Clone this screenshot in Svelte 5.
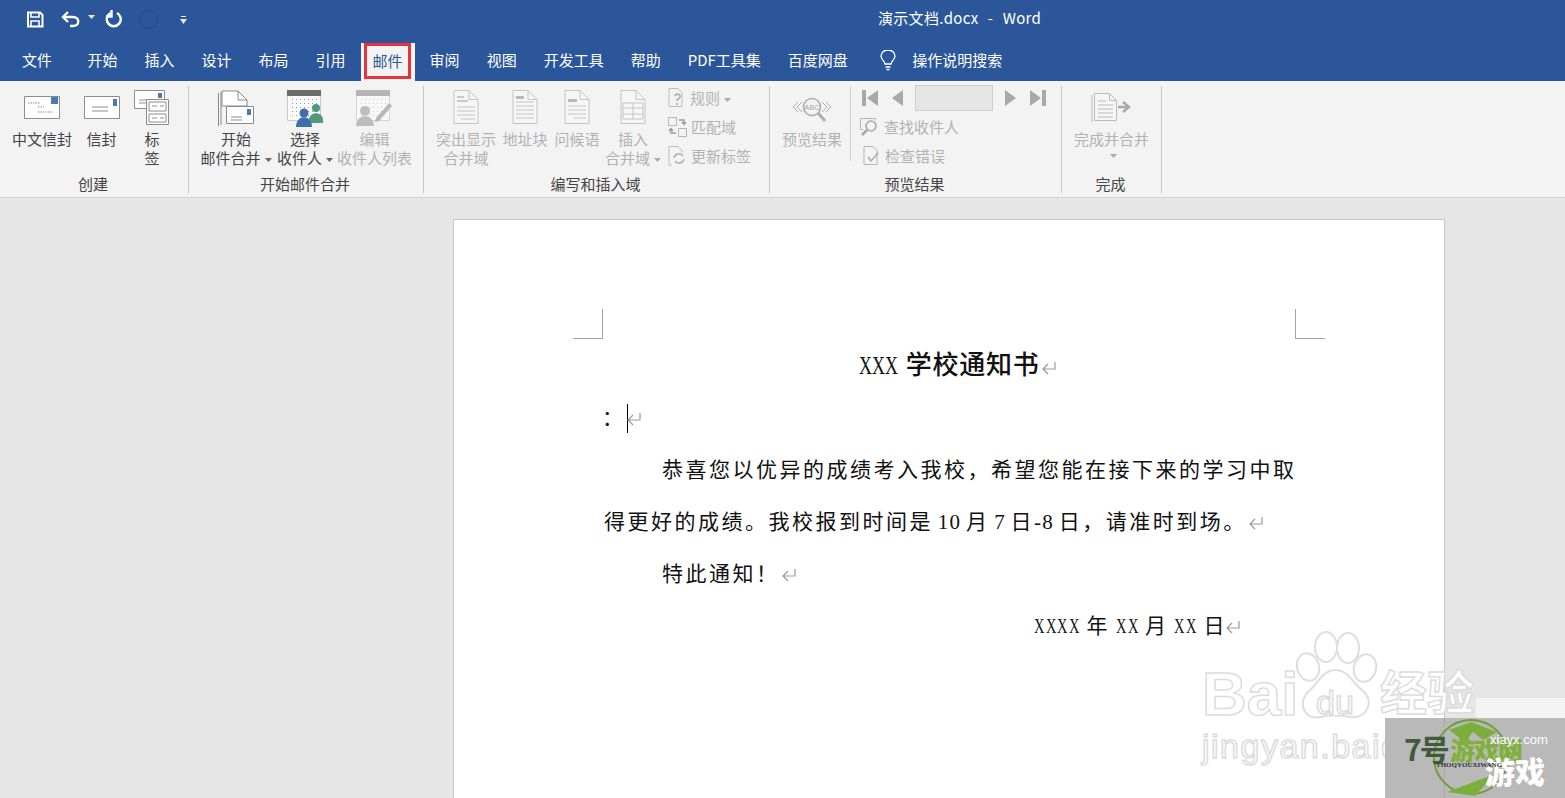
<script>
  const tabs = ['开始', '插入', '设计', '布局', '引用', '邮件', '审阅', '视图', '开发工具', '帮助', 'PDF工具集', '百度网盘'];
  const ACTIVE_TAB = '邮件';
</script>

{#snippet caret(color = '#666')}
  <svg class="caret" width="7" height="4" viewBox="0 0 7 4"><path d="M0 0h7L3.5 4z" fill={color} /></svg>
{/snippet}

{#snippet returnMark()}
  <svg class="ret" width="17" height="14" viewBox="0 0 17 14" fill="none" stroke="#9a9a9a" stroke-width="1.2"><path d="M14 1v7H2M7 3 2 8l5 5" /></svg>
{/snippet}

{#snippet xs(n)}
  {#each Array(n) as _}<span class="x"><b>X</b></span>{/each}
{/snippet}

{#snippet mergeDoc(kind)}
  <svg width="30" height="36" viewBox="0 0 30 36" fill="#f6f6f6" stroke="#c4c4c4">
    <path d="M3 1.5h15l9 9v24H3z" /><path d="M18 1.5v9h9" fill="none" />
    {#if kind === 'highlight'}
      <path d="M6 7h7v2H6zM6 11h11v2H6z" fill="#c9c9c9" stroke="none" />
      <path d="M6 18h18M6 22h18M6 26h18M10 30h14" fill="none" />
    {:else if kind === 'address'}
      <path d="M6 7h8v3H6z" fill="#b8b8b8" stroke="none" />
      <path d="M6 13h18M6 17h18M6 21h18M6 25h18M6 29h18" fill="none" />
    {:else if kind === 'greeting'}
      <path d="M6 10h9v3H6z" fill="#b8b8b8" stroke="none" />
      <path d="M6 17h18M6 21h18M6 25h18M12 29h12" fill="none" />
    {:else}
      <path d="M5 14h20v16H5zM15 14v16M5 19h20M5 25h20" fill="none" />
    {/if}
  </svg>
{/snippet}

<div class="app">
  <header class="titlebar">
    <div class="qat">
      <svg class="q-save" width="18" height="17" viewBox="0 0 18 17" fill="none" stroke="#fff" stroke-width="2"><path d="M2 1.5h12l2.5 2.500v11.500H2z" /><path d="M5 2v4h8V2M5 15v-5h8v5" stroke-width="1.6" /></svg>
      <svg class="q-undo" width="20" height="18" viewBox="0 0 20 18" fill="none" stroke="#fff" stroke-width="2.4"><path d="M7 2 2 7l5 5" /><path d="M2 7h10c7 0 7 9 0 9H9" /></svg>
      <svg class="q-caret" width="7" height="4" viewBox="0 0 7 4"><path d="M0 0h7L3.5 4z" fill="#e6ecf5" /></svg>
      <svg class="q-redo" width="18" height="18" viewBox="0 0 18 18" fill="none" stroke="#fff" stroke-width="2.4"><path d="M12 3a7 7 0 1 1-6.500 0" /><path d="M6.500 0v6.500H1" /></svg>
      <span class="q-circle"></span>
      <svg class="q-more" width="7" height="8" viewBox="0 0 7 8" fill="#e6ecf5"><path d="M1 0h5v1H1zM0 3h7L3.5 8z" /></svg>
    </div>
    <div class="doc-title">演示文档.docx&nbsp; -&nbsp; Word</div>
  </header>

  <nav class="tabs">
    <span class="tab file">文件</span>
    {#each tabs as tab}
      <span class="tab" class:active={tab === ACTIVE_TAB}>{tab}</span>
    {/each}
    <svg class="bulb" width="16" height="21" viewBox="0 0 16 21" fill="none" stroke="#fff" stroke-width="1.3"><path d="M5 14c0-3-4-4-4-8a7 6 0 0 1 14 0c0 4-4 5-4 8z" /><path d="M5.500 17h5M6.500 19.500h3" /></svg>
    <span class="tab search">操作说明搜索</span>
  </nav>

  <section class="ribbon">
    <div class="group g1">
      <div class="items">
        <div class="btn" style="width:60px">
          <div class="icon">
            <svg width="36" height="23" viewBox="0 0 36 23" fill="#fff" stroke="#8d8d8d"><path d="M.5.5h35v22H.5z" /><path d="M4 7h12M14 11h6M14 16h14" fill="none" stroke-dasharray="1.5 1" /><path d="M27 1h7v7h-7z" fill="#4a7bb0" stroke="none" /></svg>
          </div>
          <span>中文信封</span>
        </div>
        <div class="btn" style="width:59px">
          <div class="icon">
            <svg width="36" height="23" viewBox="0 0 36 23" fill="#fff" stroke="#8d8d8d"><path d="M.5.5h35v22H.5z" /><path d="M8 11h16M8 15h16" fill="none" /><path d="M29 3h4v7h-4z" fill="#4a7bb0" stroke="none" /></svg>
          </div>
          <span>信封</span>
        </div>
        <div class="btn" style="width:42px">
          <div class="icon tall">
            <svg width="36" height="36" viewBox="0 0 36 36" fill="#fff" stroke="#8d8d8d"><path d="M.5.5h30v18H.5z" /><path d="M24 3h4v5h-4z" fill="#4a7bb0" stroke="none" /><path d="M5 10h8M5 13h8" fill="none" /><path d="M12.500 9.500h22v25h-22z" /><path d="M15 12h17v9H15zM15 24h17v8H15z" fill="none" /><path d="M18 16h5M26 16h4M18 28h5M26 28h4" fill="none" /></svg>
          </div>
          <span>标</span><span>签</span>
        </div>
      </div>
      <div class="label">创建</div>
    </div>

    <div class="group g2">
      <div class="items">
        <div class="btn first-merge" style="width:70px">
          <div class="icon">
            <svg width="36" height="37" viewBox="0 0 36 37" fill="#fff" stroke="#8a8a8a"><path d="M.5 3v33M3 2v33" fill="none" /><path d="M4 1h16l9 9v6H4z" /><path d="M20 1v9h9" fill="none" /><path d="M8.500 16.500h27v17h-27z" /><path d="M13 27h11M13 30h11" fill="none" /><path d="M29 19h4v6h-4z" fill="#4a7bb0" stroke="none" /></svg>
          </div>
          <span>开始</span>
          <span>邮件合并{@render caret()}</span>
        </div>
        <div class="btn" style="width:64px">
          <div class="icon">
            <svg width="37" height="37" viewBox="0 0 37 37"><defs><pattern id="dots" width="4" height="4" patternUnits="userSpaceOnUse"><rect x="1" y="1" width="1" height="1" fill="#9a9a9a" /></pattern></defs><path d="M.5.5h33v30H.5z" fill="#fbfbfb" stroke="#c9c9c9" /><path d="M2 7h30v22H2z" fill="url(#dots)" /><path d="M0 0h34v6H0z" fill="#6d6d6d" /><circle cx="29" cy="18" r="4" fill="#4f9a7c" /><path d="M22 30c0-9 14-9 14 0v3H22z" fill="#4f9a7c" /><circle cx="17" cy="23" r="4.500" fill="#3d70a8" /><path d="M9 37c0-13 16-13 16 0z" fill="#3d70a8" /></svg>
          </div>
          <span>选择</span>
          <span>收件人{@render caret()}</span>
        </div>
        <div class="btn off" style="width:75px">
          <div class="icon">
            <svg width="37" height="37" viewBox="0 0 37 37"><path d="M.5.5h33v30H.5z" fill="#f8f8f8" stroke="#d5d5d5" /><path d="M2 7h30v22H2z" fill="url(#dots)" opacity=".5" /><path d="M0 0h34v6H0z" fill="#b5b5b5" /><circle cx="9" cy="21" r="5" fill="#bdbdbd" /><path d="M0 36c0-13 18-13 18 0z" fill="#bdbdbd" /><path d="M20 28 33 13l3 3-13 15-4 1z" fill="#b8b8b8" /></svg>
          </div>
          <span>编辑</span>
          <span>收件人列表</span>
        </div>
      </div>
      <div class="label">开始邮件合并</div>
    </div>

    <div class="group g3">
      <div class="items">
        <div class="btn off" style="width:60px">
          <div class="icon">{@render mergeDoc('highlight')}</div>
          <span>突出显示</span><span>合并域</span>
        </div>
        <div class="btn off" style="width:58px">
          <div class="icon">{@render mergeDoc('address')}</div>
          <span>地址块</span>
        </div>
        <div class="btn off" style="width:46px">
          <div class="icon">{@render mergeDoc('greeting')}</div>
          <span>问候语</span>
        </div>
        <div class="btn off" style="width:66px">
          <div class="icon">{@render mergeDoc('table')}</div>
          <span>插入</span><span>合并域{@render caret('#aaa')}</span>
        </div>
        <div class="col">
          <div class="row off">
            <svg width="18" height="19" viewBox="0 0 18 19" fill="none" stroke="#bdbdbd"><path d="M1 .5h9l4 4v14H1z" /><path d="M7 8c1-3 6-2 5 1-1 2-3 2-3 4M9 15v2" stroke="#a8a8a8" stroke-width="1.6" /></svg>
            <span>规则{@render caret('#aaa')}</span>
          </div>
          <div class="row off">
            <svg width="19" height="20" viewBox="0 0 19 20" fill="none" stroke="#b5b5b5"><path d="M.5.5h8v8h-8zM10.500 11.500h8v8h-8z" /><path d="M11 3h5v4M14 5l2 2.500L18 5M8 16H3v-4M1 14l2-2.500L5 14" stroke="#999" stroke-width="1.300" /></svg>
            <span>匹配域</span>
          </div>
          <div class="row off">
            <svg width="19" height="20" viewBox="0 0 19 20" fill="none" stroke="#bdbdbd"><path d="M4 19H1V.5h9l4 4v2" /><path d="M6 12a5 5 0 0 1 9-2M16 13a5 5 0 0 1-9 2" stroke="#a8a8a8" stroke-width="1.400" /></svg>
            <span>更新标签</span>
          </div>
        </div>
      </div>
      <div class="label">编写和插入域</div>
    </div>

    <div class="group g4">
      <div class="items">
        <div class="btn off" style="width:60px">
          <div class="icon">
            <svg width="40" height="26" viewBox="0 0 40 26" fill="none" stroke="#aeaeae"><path d="M6 5 1 10l5 5M10 5l-5 5 5 5M30 5l5 5-5 5M34 5l5 5-5 5" /><circle cx="20" cy="10" r="8.500" stroke-width="1.600" /><path d="m26 16 7 8" stroke-width="3" /><text x="20" y="13" font-size="7.500" text-anchor="middle" fill="#a5a5a5" stroke="none" font-family="Liberation Sans">ABC</text></svg>
          </div>
          <span>预览结果</span>
        </div>
        <div class="vsep"></div>
        <div class="col nav-col">
          <div class="nav">
            <svg width="16" height="16" viewBox="0 0 16 16" fill="#a8a8a8"><path d="M0 0h4v16H0zM16 0v16L5 8z" /></svg>
            <svg class="n2" width="11" height="16" viewBox="0 0 11 16" fill="#a8a8a8"><path d="M11 0v16L0 8z" /></svg>
            <div class="record"></div>
            <svg class="n3" width="11" height="16" viewBox="0 0 11 16" fill="#a8a8a8"><path d="M0 0v16l11-8z" /></svg>
            <svg class="n4" width="16" height="16" viewBox="0 0 16 16" fill="#a8a8a8"><path d="M12 0h4v16h-4zM0 0v16l11-8z" /></svg>
          </div>
          <div class="row off">
            <svg width="20" height="20" viewBox="0 0 20 20" fill="none" stroke="#b5b5b5"><path d="M.5 1.500h15v2M.5 1.500v11h3" /><circle cx="11" cy="9" r="5" stroke="#a8a8a8" stroke-width="1.600" /><path d="m7 13-5 5" stroke="#a8a8a8" stroke-width="2.600" /></svg>
            <span>查找收件人</span>
          </div>
          <div class="row off">
            <svg class="check" width="18" height="19" viewBox="0 0 18 19" fill="none" stroke="#b5b5b5"><path d="M1 .5h9l4 4v14H1z" /><path d="m5 11 3 4 7-8" stroke="#a8a8a8" stroke-width="1.400" /></svg>
            <span>检查错误</span>
          </div>
        </div>
      </div>
      <div class="label">预览结果</div>
    </div>

    <div class="group g5">
      <div class="items">
        <div class="btn off" style="width:75px">
          <div class="icon">
            <svg width="41" height="31" viewBox="0 0 41 31" fill="#f6f6f6" stroke="#bcbcbc"><path d="M1 3v27M3.500 1.500h15l7 7v20h-22z" /><path d="M18.500 1.500v7h7M7 9h8M7 13h15M7 17h15M7 21h15M7 25h15" fill="none" /><path d="M27 15h9M32 10l6 5-6 5" fill="none" stroke="#a9a9a9" stroke-width="2.400" /></svg>
          </div>
          <span>完成并合并</span>
          <span class="under-caret">{@render caret('#aaa')}</span>
        </div>
      </div>
      <div class="label">完成</div>
    </div>
  </section>

  <main class="workspace">
    <div class="page">
      <i class="crop left"></i>
      <i class="crop right"></i>
      <h1>{@render xs(3)} 学校通知书<span class="hang">{@render returnMark()}</span></h1>
      <p class="line"><span class="colon">：</span><span class="cursor"></span><span class="tight">{@render returnMark()}</span></p>
      <p class="line indent">恭喜您以优异的成绩考入我校，希望您能在接下来的学习中取</p>
      <p class="line spaced">得更好的成绩。我校报到时间是 <span class="lat">10</span> 月 <span class="lat">7</span> 日<span class="lat">-8</span> 日，请准时到场。{@render returnMark()}</p>
      <p class="line indent">特此通知！{@render returnMark()}</p>
      <p class="line date">{@render xs(4)} 年 {@render xs(2)} 月 {@render xs(2)} 日<span class="tight">{@render returnMark()}</span></p>
    </div>
  </main>

  <div class="wm-baidu">
    <svg class="paw" width="84" height="92" viewBox="0 0 84 92" fill="#fff" stroke="#dedede" stroke-width="2">
      <ellipse cx="14" cy="37" rx="11" ry="14" transform="rotate(-15 14 37)" />
      <ellipse cx="32" cy="17" rx="11" ry="15" />
      <ellipse cx="54" cy="18" rx="11" ry="15" />
      <ellipse cx="71" cy="38" rx="11" ry="14" transform="rotate(15 71 38)" />
      <path d="M42 40c12 0 16 13 27 21 12 10 4 28-12 26-9-1-20-3-30 0C12 90 3 76 13 63c11-9 15-23 29-23z" />
    </svg>
    <span class="wm-bai">Bai</span>
    <span class="wm-du">du</span>
    <span class="wm-jy">经验</span>
    <span class="wm-url">jingyan.baidu</span>
  </div>

  <div class="wm-strip"></div>
  <div class="wm-box">
    <i class="wm-pageline"></i>
    <svg class="wm-logo" width="84" height="80" viewBox="0 0 84 80" fill="none">
      <circle cx="40" cy="39" r="37" stroke="#6f9f3a" stroke-width="2" />
      <path d="M18 12 40 4l26 10-14 8-10-8-8 10z" fill="#7cae3c" />
      <path d="M16 74 64 56l-20 22z" fill="#7cae3c" />
    </svg>
    <span class="wm-seven">7号</span>
    <span class="wm-green">游戏网</span>
    <span class="wm-com">xiayx.com</span>
    <span class="wm-game">游戏</span>
    <span class="wm-pin">THOQYOUXIWANG</span>
  </div>
</div>

<style>
  :global(body) {
    margin: 0;
    background: #e6e6e6;
  }

  .app {
    position: relative;
    height: 798px;
    overflow: hidden;
    font-family: "Noto Sans CJK SC", "Liberation Sans", sans-serif;
    font-size: 15px;
    color: #444;
  }

  .titlebar {
    display: flex;
    height: 40px;
    background: #2b579a;
    color: #fff;
  }

  .qat {
    display: flex;
    align-items: center;
    width: 878px;
    height: 38px;
    padding-left: 26px;
    box-sizing: border-box;
  }

  .q-undo { margin-left: 17px; }
  .q-caret { margin: 0 0 4px 7px; }
  .q-redo { margin-left: 10px; }

  .q-circle {
    width: 17px;
    height: 17px;
    margin-left: 16px;
    border: 1px solid #1f4a8a;
    border-radius: 50%;
  }

  .q-more { margin: 2px 0 0 22px; }

  .doc-title {
    line-height: 36px;
    white-space: nowrap;
    letter-spacing: .3px;
    word-spacing: 1px;
  }

  .tabs {
    display: flex;
    align-items: center;
    height: 41px;
    background: #2b579a;
    color: #fff;
    padding-left: 9px;
  }

  .tab {
    align-self: stretch;
    padding: 0 13.5px;
    line-height: 40px;
    white-space: nowrap;
  }

  .tab.file { padding: 0 13px; margin-right: 9px; }

  .tab.active {
    position: relative;
    margin: 3px 1.5px 0;
    padding: 0 12px;
    background: #f3f3f3;
    color: #2b579a;
    line-height: 35px;
  }

  .tab.active::after {
    content: '';
    position: absolute;
    left: 3px;
    right: 4px;
    top: 0;
    bottom: 2px;
    border: 3px solid #e8333c;
  }

  .bulb { margin-left: 19px; }
  .tab.search { padding-left: 16px; }

  .ribbon {
    display: flex;
    background: #f3f3f3;
    border-bottom: 1px solid #d4d4d4;
    box-sizing: border-box;
    height: 117px;
  }

  .group {
    display: flex;
    flex-direction: column;
    box-sizing: border-box;
    height: 107px;
    margin-top: 5px;
    border-right: 1px solid #c6c6c6;
    padding-left: 12px;
  }

  .g1 { width: 189px; }
  .g2 { width: 235px; }
  .g3 { width: 346px; }
  .g4 { width: 292px; }
  .g5 { width: 100px; }

  .items {
    display: flex;
    height: 90px;
  }

  .label {
    line-height: 19px;
    text-align: center;
    margin-left: -14px;
    color: #444;
  }

  .btn {
    display: flex;
    flex-direction: column;
    align-items: center;
    line-height: 19px;
    white-space: nowrap;
  }

  .first-merge { margin-right: 2px; }
  .off { color: #b2b2b2; }

  .icon {
    display: flex;
    align-items: flex-start;
    justify-content: center;
    height: 43px;
  }

  .icon svg { margin-top: 5px; }
  .g1 .icon svg { margin-top: 10px; }
  .g1 .icon.tall svg { margin-top: 4px; }
  .g2 .icon svg { margin-top: 4px; }
  .g3 .icon svg { margin-top: 3px; }
  .g4 .icon svg { margin-top: 11px; }
  .g5 .icon svg { margin-top: 6px; }

  .under-caret {
    display: block;
    height: 12px;
    line-height: 12px;
  }

  .caret {
    vertical-align: middle;
    margin-left: 4px;
  }

  .col {
    display: flex;
    flex-direction: column;
    margin-left: 2px;
    margin-top: -3px;
  }

  .row {
    display: flex;
    align-items: center;
    gap: 4px;
    height: 29px;
    white-space: nowrap;
  }

  .vsep {
    width: 1px;
    height: 75px;
    margin-left: 8px;
    background: #cfcfcf;
  }

  .nav-col { margin-left: 9px; }

  .nav {
    display: flex;
    align-items: center;
    height: 29px;
    padding-left: 2px;
  }

  .n2 { margin-left: 14px; }
  .n3 { margin-left: 12px; }
  .n4 { margin-left: 14px; }

  .record {
    width: 76px;
    height: 24px;
    margin-left: 12px;
    border: 1px solid #cdcdcd;
    background: #e6e6e6;
  }

  .check { margin-left: 3px; }

  .workspace {
    padding: 21px 0 0 453px;
    background: #e6e6e6;
  }

  .page {
    position: relative;
    box-sizing: border-box;
    width: 992px;
    height: 700px;
    padding: 120px 149px 0 150px;
    background: #fff;
    border: 1px solid #c8c8c8;
    font-family: "Liberation Serif", "Noto Sans CJK SC", serif;
    color: #111;
  }

  .crop {
    position: absolute;
    top: 89px;
    width: 29px;
    height: 29px;
    border-bottom: 1px solid #a5a5a5;
  }

  .crop.left {
    left: 119px;
    border-right: 1px solid #a5a5a5;
  }

  .crop.right {
    right: 119px;
    border-left: 1px solid #a5a5a5;
  }

  h1 {
    margin: 0;
    height: 52px;
    line-height: 52px;
    font-size: 26px;
    font-weight: 500;
    letter-spacing: .8px;
    text-align: center;
    white-space: nowrap;
  }

  .hang { margin-right: -18px; }

  .line {
    margin: 0;
    height: 52px;
    line-height: 52px;
    font-size: 21px;
    letter-spacing: 2.5px;
    white-space: nowrap;
  }

  .lat { letter-spacing: 1.2px; }
  .spaced { word-spacing: -3px; }
  .indent { text-indent: 58px; }

  .date {
    text-align: right;
    padding-right: 53px;
    word-spacing: -2px;
  }

  .x {
    display: inline-block;
    width: 11.75px;
    text-indent: 0;
  }

  .x b {
    display: inline-block;
    font-weight: inherit;
    transform: scaleX(.69);
    transform-origin: left;
  }

  h1 .x { width: 13px; }

  .ret {
    vertical-align: -1px;
    margin-left: 1px;
  }

  .colon { margin-left: -2px; margin-right: 2px; }
  .tight { margin-left: -3px; }

  .cursor {
    display: inline-block;
    width: 1px;
    height: 29px;
    margin-left: -1px;
    background: #000;
    vertical-align: -8px;
  }

  .wm-baidu {
    position: absolute;
    left: 1200px;
    top: 630px;
    width: 280px;
    height: 140px;
    pointer-events: none;
    font-family: "Liberation Sans", "Noto Sans CJK SC", sans-serif;
    color: #fff;
    -webkit-text-stroke: 1.5px #dcdcdc;
  }

  .wm-baidu span { position: absolute; white-space: nowrap; }
  .paw { position: absolute; left: 94px; top: 0; }

  .wm-bai {
    left: 2px;
    top: 26px;
    font-size: 62px;
    line-height: 76px;
    font-weight: 700;
  }

  .wm-du {
    left: 116px;
    top: 52px;
    font-size: 34px;
    line-height: 40px;
  }

  .wm-jy {
    left: 180px;
    top: 36px;
    font-size: 47px;
    line-height: 56px;
    font-weight: 700;
  }

  .wm-url {
    left: 2px;
    top: 96px;
    font-size: 34px;
    line-height: 40px;
    letter-spacing: 1.5px;
  }

  .wm-strip {
    position: absolute;
    left: 1476px;
    top: 698px;
    width: 89px;
    height: 20px;
    background: #f3f3f3;
  }

  .wm-box {
    position: absolute;
    left: 1385px;
    top: 718px;
    width: 180px;
    height: 80px;
    background: #b9b9b9;
    font-family: "Noto Sans CJK SC", "Liberation Sans", sans-serif;
  }

  .wm-box span { position: absolute; white-space: nowrap; }
  .wm-logo { position: absolute; left: 46px; top: 0; }

  .wm-pageline {
    position: absolute;
    left: 59px;
    top: 0;
    width: 1px;
    height: 80px;
    background: #a9a9a9;
  }

  .wm-seven {
    left: 19px;
    top: 12px;
    font-size: 30px;
    line-height: 36px;
    font-weight: 700;
    color: #3f5a3c;
    letter-spacing: -2px;
  }

  .wm-green {
    left: 65px;
    top: 16px;
    font-size: 25px;
    line-height: 30px;
    font-weight: 900;
    color: #7fb13a;
    letter-spacing: -1px;
  }

  .wm-com {
    left: 105px;
    top: 13px;
    font-size: 13px;
    line-height: 18px;
    color: #fff;
    font-family: "Liberation Sans", sans-serif;
  }

  .wm-game {
    left: 100px;
    top: 34px;
    font-size: 30px;
    line-height: 36px;
    font-weight: 900;
    color: #fff;
  }

  .wm-pin {
    left: 51px;
    top: 42px;
    font-size: 7px;
    line-height: 10px;
    font-weight: 700;
    color: #333;
    font-family: "Liberation Serif", serif;
  }
</style>
